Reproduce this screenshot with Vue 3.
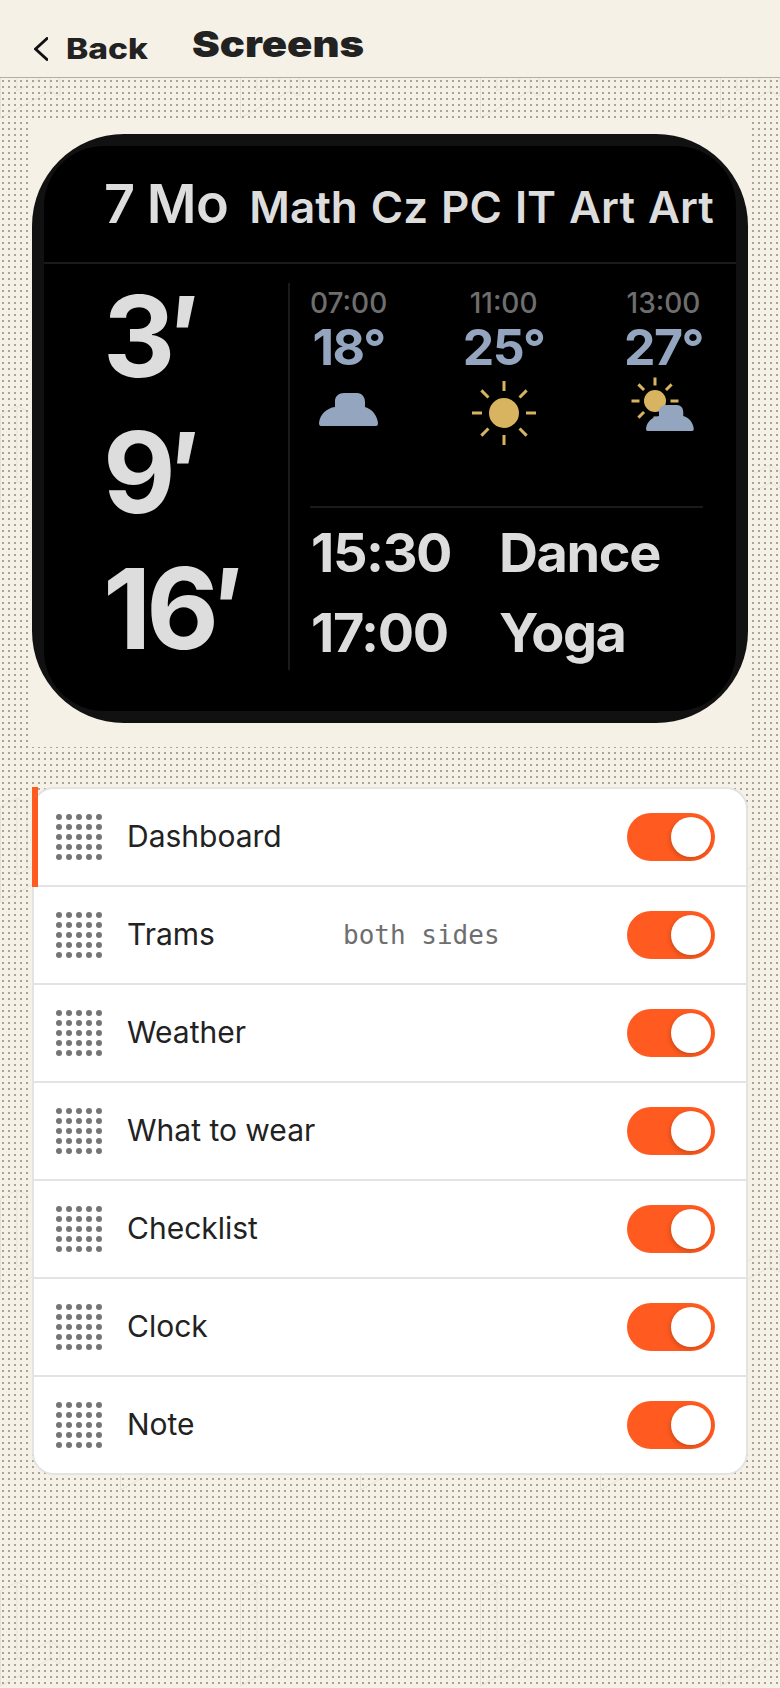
<script setup>
const subjects = ['Math', 'Cz', 'PC', 'IT', 'Art', 'Art']
const minutes = ['3′', '9′', '16′']
const forecast = [
  { time: '07:00', temp: '18°', icon: 'cloud' },
  { time: '11:00', temp: '25°', icon: 'sun' },
  { time: '13:00', temp: '27°', icon: 'partly' },
]
const events = [
  { time: '15:30', name: 'Dance' },
  { time: '17:00', name: 'Yoga' },
]
const screens = [
  { name: 'Dashboard', active: true },
  { name: 'Trams', note: 'both sides' },
  { name: 'Weather' },
  { name: 'What to wear' },
  { name: 'Checklist' },
  { name: 'Clock' },
  { name: 'Note' },
]
const cloudPath = 'M2 33Q0 33 0 30C1 21 8 15 16 14L16 8C16 3 20 0 25 0L38 0C43 0 46 4 46 9L46 14C53 16 58 22 59 30Q59 33 57 33Z'
const rayAngles = [0, 45, 90, 135, 180, 225, 270, 315]
const handleDots = []
for (let y = 0; y < 5; y++) {
  for (let x = 0; x < 5; x++) handleDots.push({ cx: 3 + x * 10, cy: 3 + y * 10 })
}
</script>

<template>
  <div class="page">
    <header class="topbar">
      <svg class="chevron" width="14" height="24" viewBox="0 0 14 24">
        <path d="M13 1.5L1.5 12L13 22.5" fill="none" stroke="#111" stroke-width="3" stroke-linecap="round" stroke-linejoin="round" />
      </svg>
      <span class="back">Back</span>
      <span class="title">Screens</span>
    </header>

    <section class="preview">
      <div class="device">
        <div class="screen">
          <div class="schedule">
            <span class="day">7</span>
            <span class="day day-name">Mo</span>
            <div class="subjects">
              <span v-for="(s, i) in subjects" :key="i">{{ s }}</span>
            </div>
          </div>
          <div class="body">
            <div class="trams">
              <div v-for="m in minutes" :key="m" class="minute">{{ m }}</div>
            </div>
            <div class="side">
              <div class="forecast">
                <div v-for="f in forecast" :key="f.time" class="slot">
                  <div class="slot-time">{{ f.time }}</div>
                  <div class="slot-temp">{{ f.temp }}</div>
                  <svg class="slot-icon" width="72" height="68" viewBox="0 0 72 68">
                    <path v-if="f.icon === 'cloud'" :d="cloudPath" transform="translate(6 16)" fill="#93a5bf" />
                    <g v-if="f.icon === 'sun'" transform="translate(36 36)">
                      <circle r="15" fill="#d8b460" />
                      <line v-for="a in rayAngles" :key="a" x1="22" x2="32" :transform="`rotate(${a})`" stroke="#d8b460" stroke-width="3" />
                    </g>
                    <g v-if="f.icon === 'partly'">
                      <g transform="translate(28 24)">
                        <circle r="11" fill="#d8b460" />
                        <line v-for="a in rayAngles" :key="a" x1="15.5" x2="23.5" :transform="`rotate(${a})`" stroke="#d8b460" stroke-width="3" />
                      </g>
                      <path :d="cloudPath" transform="translate(19 28) scale(.81 .79)" fill="#93a5bf" />
                    </g>
                  </svg>
                </div>
              </div>
              <div class="events">
                <div v-for="e in events" :key="e.time" class="event">
                  <span class="event-time">{{ e.time }}</span>
                  <span>{{ e.name }}</span>
                </div>
              </div>
            </div>
          </div>
        </div>
      </div>
    </section>

    <ul class="list">
      <li v-for="s in screens" :key="s.name" class="row">
        <i v-if="s.active" class="accent"></i>
        <svg class="handle" width="46" height="46" viewBox="0 0 46 46">
          <circle v-for="(d, i) in handleDots" :key="i" :cx="d.cx" :cy="d.cy" r="3" fill="#757575" />
        </svg>
        <span class="name">{{ s.name }}</span>
        <span v-if="s.note" class="note">{{ s.note }}</span>
        <span class="toggle"><i class="knob"></i></span>
      </li>
    </ul>
  </div>
</template>

<style scoped>
.page {
  min-height: 100vh;
  font-family: Inter, "Noto Sans", sans-serif;
  color: #222;
  background-color: #f6f1e6;
  background-image:
    url("data:image/svg+xml,%3Csvg xmlns='http://www.w3.org/2000/svg' width='6' height='6'%3E%3Crect x='2' y='2' width='2' height='2' fill='%23a9a497'/%3E%3C/svg%3E"),
    url("data:image/svg+xml,%3Csvg xmlns='http://www.w3.org/2000/svg' width='240' height='392'%3E%3Cdefs%3E%3Cpath id='c' d='M.5 118V23L17 14L27 19M17 14V91L50 73L60 79V96L50 91V73M27 19V81M17 91M.5 118L50 91' fill='none' stroke='%23e7e3d7'/%3E%3C/defs%3E%3Cuse href='%23c'/%3E%3Cuse href='%23c' x='120' y='196'/%3E%3C/svg%3E");
  background-size: 6px 6px, 240px 392px;
}
.topbar {
  height: 77px;
  display: flex;
  align-items: flex-start;
  background: #f6f1e6;
  border-bottom: 1px solid #b6ae9c;
}
.chevron { margin: 37px 0 0 34px; flex: none; }
.back, .title {
  display: block;
  font-weight: 800;
  color: #222;
  transform-origin: left center;
  white-space: nowrap;
}
.back {
  width: 125px;
  margin: 32px 0 0 18px;
  font-size: 28px;
  line-height: 34px;
  transform: scaleX(1.2);
}
.title {
  margin-top: 22px;
  margin-left: 1px;
  font-size: 36px;
  line-height: 44px;
  font-weight: 900;
  transform: scaleX(1.16);
}
.preview {
  margin: 40px 28px 0;
  padding: 16px 4px 24px;
  background: #f6f1e6;
}
.device {
  height: 589px;
  padding: 12px;
  box-sizing: border-box;
  background: #111;
  border-radius: 92px;
}
.screen {
  height: 100%;
  background: #000;
  border-radius: 60px;
  color: #ddd;
  overflow: hidden;
}
.schedule {
  height: 118px;
  display: flex;
  align-items: baseline;
  padding-left: 60px;
  box-sizing: border-box;
  padding-top: 26px;
  border-bottom: 2px solid #1a1a1a;
  font-weight: 600;
}
.day { font-size: 54px; line-height: 64px; letter-spacing: -.5px; }
.day-name { margin-left: 12px; }
.subjects {
  display: flex;
  gap: 13px;
  margin-left: 21px;
  font-size: 44px;
  line-height: 64px;
  font-weight: 600;
}
.body { display: flex; }
.trams {
  width: 244px;
  flex: none;
  box-sizing: border-box;
  padding: 4px 0 0 59px;
}
.minute {
  font-size: 112px;
  line-height: 136px;
  font-weight: 700;
  letter-spacing: -5px;
}
.side {
  margin-top: 19px;
  height: 387px;
  width: 415px;
  box-sizing: border-box;
  border-left: 2px solid #1a1a1a;
  padding-left: 20px;
}
.forecast {
  display: flex;
  justify-content: space-between;
  height: 225px;
  box-sizing: border-box;
  border-bottom: 2px solid #1a1a1a;
}
.slot { display: flex; flex-direction: column; align-items: center; }
.slot:nth-child(2) { margin-right: 4px; }
.slot-time {
  margin-top: 3px;
  font-size: 28px;
  line-height: 34px;
  font-weight: 500;
  color: #6e6e6e;
}
.slot-temp {
  margin-top: 2px;
  font-size: 50px;
  line-height: 50px;
  font-weight: 700;
  letter-spacing: -1.5px;
  color: #93a5bf;
}
.slot-icon { margin-top: 5px; flex: none; }
.events { padding: 5px 0 0 1px; }
.event {
  display: flex;
  font-size: 54px;
  line-height: 80px;
  font-weight: 700;
  letter-spacing: -1.4px;
}
.event-time { width: 188px; flex: none; }
.list {
  margin: 40px 32px 0;
  padding: 0;
  list-style: none;
  background: #fff;
  border: 2px solid #e3e3e3;
  border-radius: 22px;
}
.row {
  position: relative;
  height: 98px;
  box-sizing: border-box;
  display: flex;
  align-items: center;
  padding: 0 31px 0 22px;
  border-bottom: 2px solid #e3e3e3;
}
.row:last-child { border-bottom: 0; height: 96px; }
.accent {
  position: absolute;
  left: -2px;
  top: -2px;
  bottom: -2px;
  width: 6px;
  background: #ff5a1f;
}
.handle { flex: none; }
.name {
  width: 216px;
  margin: 0 0 2px 25px;
  font-size: 30px;
  color: #222;
  white-space: nowrap;
}
.note {
  font-family: "DejaVu Sans Mono", "Liberation Mono", monospace;
  font-size: 26px;
  color: #6e6e6e;
}
.toggle {
  margin-left: auto;
  position: relative;
  width: 88px;
  height: 48px;
  border-radius: 24px;
  background: #ff5a1f;
  flex: none;
}
.knob {
  position: absolute;
  top: 4px;
  right: 4px;
  width: 40px;
  height: 40px;
  border-radius: 50%;
  background: #fff;
  box-shadow: -1px 2px 4px rgba(0, 0, 0, .18);
}
</style>

<style>
body { margin: 0; }
</style>
